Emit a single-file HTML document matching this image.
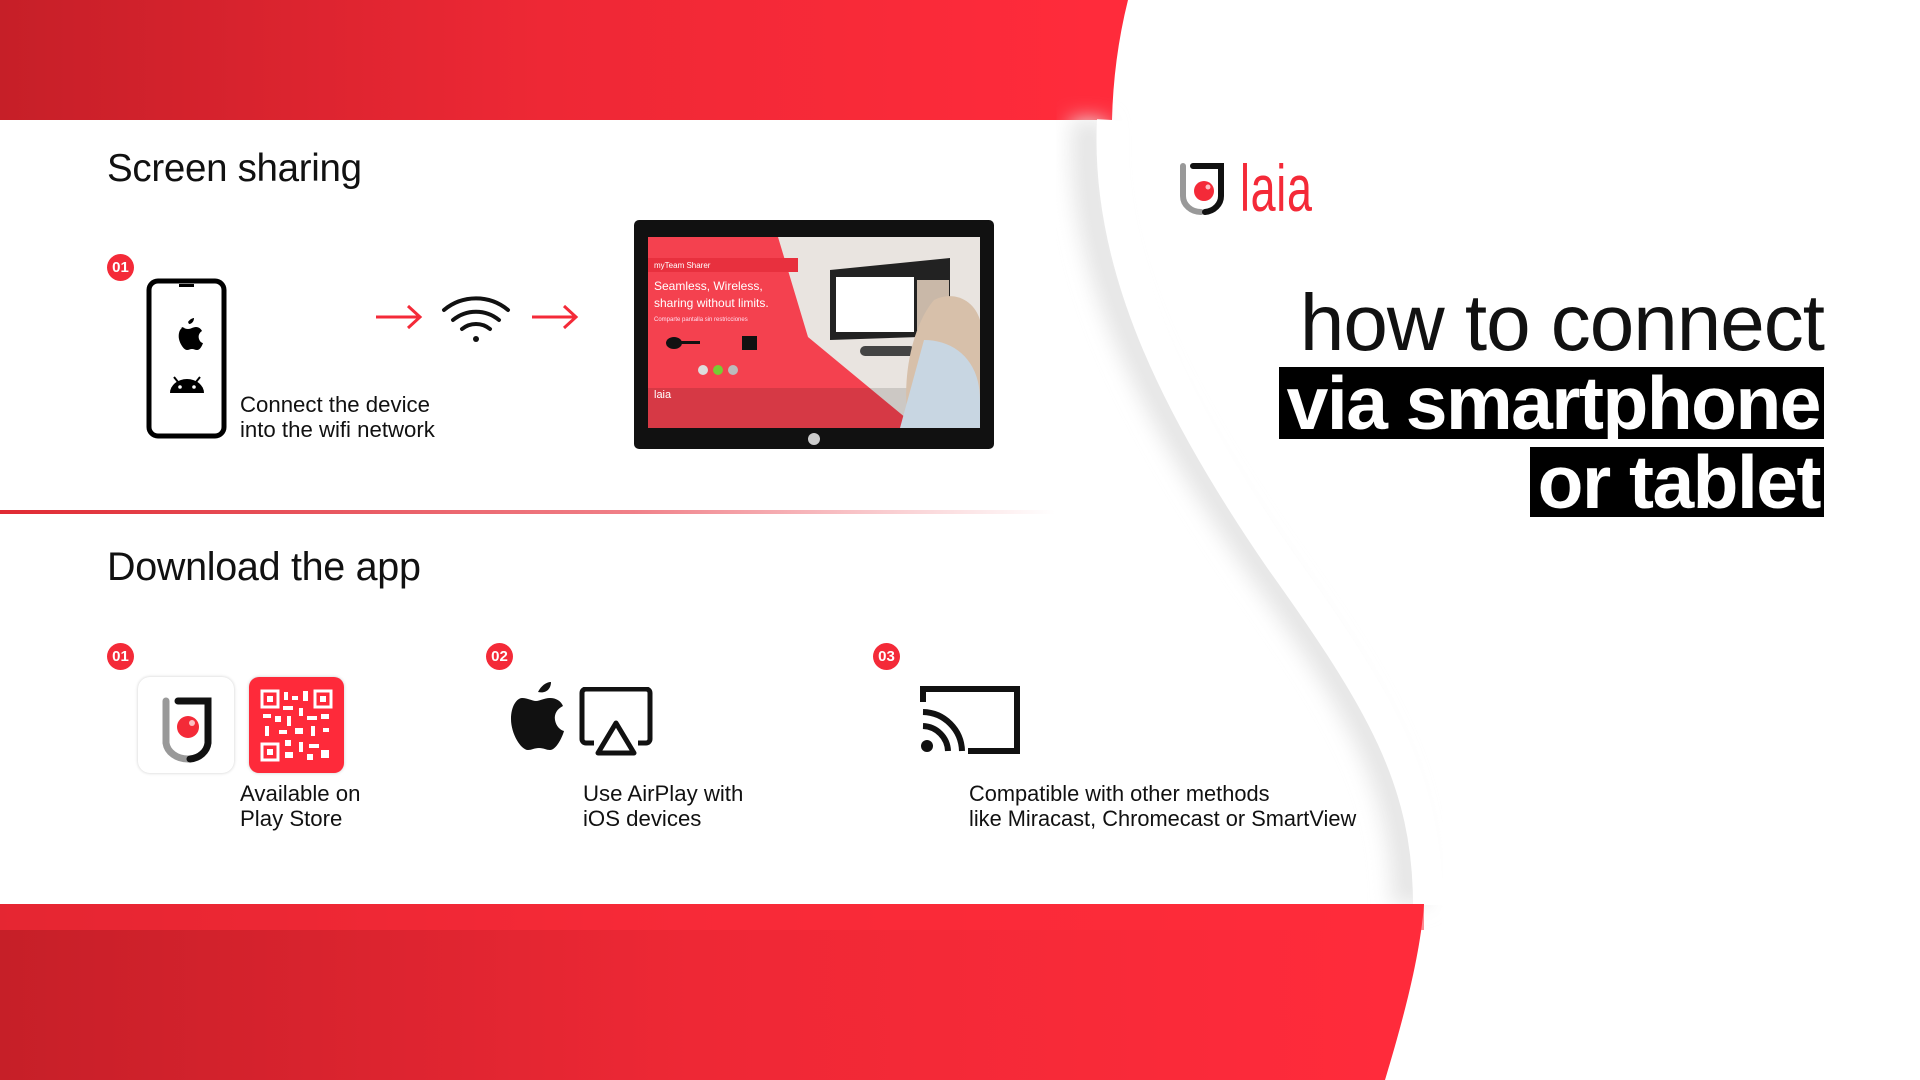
<!DOCTYPE html>
<html><head><meta charset="utf-8">
<style>
*{margin:0;padding:0;box-sizing:border-box}
body{width:1920px;height:1080px;overflow:hidden;background:#fff;font-family:"Liberation Sans",sans-serif;color:#111;position:relative}
.abs{position:absolute}
.h2{color:#111;letter-spacing:-0.3px}
.badge{width:27px;height:27px;border-radius:50%;background:#f42a38;color:#fff;font-size:15px;font-weight:bold;text-align:center;line-height:27px}
.t{font-size:22.2px;line-height:25px;color:#111}
.hl{line-height:80px;letter-spacing:-1px;text-align:right;right:96px;white-space:nowrap}
.blk{background:#000;color:#fff;font-weight:bold;padding:0 4px 0 8px;display:inline-block}
</style></head><body>
<svg class="abs" style="left:0;top:0" width="1920" height="1080">
<defs>
<linearGradient id="rg" x1="0" x2="1"><stop offset="0" stop-color="#c61f28"/><stop offset="0.5" stop-color="#ee2835"/><stop offset="1" stop-color="#ff2b3b"/></linearGradient>
<linearGradient id="ln" x1="0" x2="1"><stop offset="0" stop-color="#e02a33"/><stop offset="0.6" stop-color="#f08088"/><stop offset="1" stop-color="#fff"/></linearGradient>
<filter id="bl"><feGaussianBlur stdDeviation="10"/></filter>
</defs>
<rect x="0" y="0" width="1090" height="120" fill="url(#rg)"/>
<path d="M1085 0 L1128 0 C1118 40 1113 80 1112 120 L1085 120Z" fill="#ff2b3b"/>
<path d="M1090 120 C1080 260 1150 400 1260 560 C1360 700 1410 780 1410 905" stroke="#e6e6e6" stroke-width="36" fill="none" filter="url(#bl)"/>
<path d="M1112 120 C1105 260 1170 400 1280 560 C1380 700 1428 780 1428 905" stroke="#fff" stroke-width="30" fill="none"/>
<rect x="0" y="904" width="1385" height="176" fill="url(#rg)"/>
<path d="M1380 904 L1424 904 C1420 960 1400 1030 1385 1080 L1380 1080Z" fill="#ff2b3b"/>
<rect x="0" y="904" width="1424" height="26" fill="#ff2b3b" opacity="0.55"/>
<rect x="0" y="510" width="1055" height="4" fill="url(#ln)"/>
</svg>

<div class="abs h2" style="left:107px;top:147px;font-size:38.5px">Screen sharing</div>
<div class="abs h2" style="left:107px;top:545px;font-size:39.5px">Download the app</div>

<div class="abs badge" style="left:107px;top:254px">01</div>
<div class="abs badge" style="left:107px;top:643px">01</div>
<div class="abs badge" style="left:486px;top:643px">02</div>
<div class="abs badge" style="left:873px;top:643px">03</div>

<svg class="abs" style="left:146px;top:278px" width="82" height="162">
<rect x="3" y="3" width="75" height="155" rx="9" fill="#fff" stroke="#000" stroke-width="5"/>
<rect x="33" y="6" width="15" height="3" fill="#000"/>
<path d="M42 44c2-3 5-4 6-4-0 3-2 6-5 6zM34 49c3 0 5 2 8 2s5-2 8-2c3 0 5 2 6 4-3 2-4 5-3 8 1 3 3 4 4 4-1 3-3 7-6 7-2 0-3-1-5-1s-3 1-5 1c-3 0-7-6-8-11-1-6 1-12 6-12z" fill="#000"/>
<path d="M24 115a17 14 0 0 1 34 0z" fill="#000"/><circle cx="34" cy="109" r="1.8" fill="#fff"/><circle cx="48" cy="109" r="1.8" fill="#fff"/>
<path d="M28 99l4 5M54 99l-4 5" stroke="#000" stroke-width="2"/>
</svg>
<svg class="abs" style="left:374px;top:292px" width="206" height="52">
<path d="M2 25h44M34 14l12 11-12 11" stroke="#f42a38" stroke-width="3" fill="none"/>
<path d="M158 25h44M190 14l12 11-12 11" stroke="#f42a38" stroke-width="3" fill="none"/>
<path d="M70 18a50 50 0 0 1 64 0M79 28a36 36 0 0 1 46 0M88 37a22 22 0 0 1 28 0" stroke="#111" stroke-width="4" fill="none" stroke-linecap="round"/>
<circle cx="102" cy="47" r="3" fill="#111"/>
</svg>
<div class="abs t" style="left:240px;top:392px">Connect the device<br>into the wifi network</div>

<svg class="abs" style="left:634px;top:220px" width="360" height="229">
<rect x="0" y="0" width="360" height="229" rx="5" fill="#111"/>
<rect x="14" y="17" width="332" height="191" fill="#e9e4e0"/>
<path d="M14 17h130l30 100 110 91H14z" fill="#f4414f"/>
<path d="M14 168h332v40H14z" fill="#000" opacity="0.12"/>
<rect x="14" y="38" width="150" height="14" fill="#e8303e"/>
<text x="20" y="48" font-size="8" fill="#fff" font-family="Liberation Sans">myTeam Sharer</text>
<text x="20" y="70" font-size="12" fill="#fff" font-family="Liberation Sans">Seamless, Wireless,</text>
<text x="20" y="87" font-size="12" fill="#fff" font-family="Liberation Sans">sharing without limits.</text>
<text x="20" y="101" font-size="6" fill="#fde" font-family="Liberation Sans">Comparte pantalla sin restricciones</text>
<ellipse cx="40" cy="123" rx="8" ry="6" fill="#111"/><rect x="44" y="121" width="22" height="3" fill="#111"/>
<rect x="108" y="116" width="15" height="14" fill="#111"/>
<circle cx="69" cy="150" r="5" fill="#ddd"/><circle cx="84" cy="150" r="5" fill="#7c3"/><circle cx="99" cy="150" r="5" fill="#bbb"/>
<text x="20" y="178" font-size="11" fill="#fff" font-family="Liberation Sans">laia</text>
<path d="M196 50l120-12v78l-120 4z" fill="#222"/><rect x="202" y="57" width="78" height="55" fill="#fff"/>
<rect x="283" y="60" width="32" height="50" fill="#c9b8a8"/>
<rect x="226" y="126" width="55" height="10" rx="5" fill="#444"/>
<path d="M300 80c20-10 40 0 46 20v108h-70c-10-40 0-100 24-128z" fill="#d7c0aa"/>
<path d="M290 120c30 0 56 20 56 60v28h-80z" fill="#c8d6e2"/>
<circle cx="180" cy="219" r="6" fill="#ccc"/>
</svg>

<div class="abs" style="left:138px;top:677px;width:96px;height:96px;border-radius:12px;background:#fff;box-shadow:0 0 3px #ccc"></div>
<svg class="abs" style="left:138px;top:677px" width="96" height="96">
<path d="M28 24v42a22 18 0 0 0 22 16" stroke="#999" stroke-width="7" fill="none" stroke-linecap="round"/>
<path d="M40 24h30v42a20 18 0 0 1-18 16" stroke="#111" stroke-width="7" fill="none" stroke-linecap="round"/>
<circle cx="50" cy="50" r="11" fill="#f42a38"/><circle cx="54" cy="46" r="3" fill="#fff" opacity="0.7"/>
</svg>
<div class="abs" style="left:249px;top:677px;width:95px;height:96px;border-radius:10px;background:#fe2a3a;box-shadow:0 0 3px #ccc"></div>
<svg class="abs" style="left:259px;top:688px" width="75" height="75">
<g fill="none" stroke="#fff" stroke-width="3"><rect x="3" y="3" width="16" height="16"/><rect x="56" y="3" width="16" height="16"/><rect x="3" y="56" width="16" height="16"/></g>
<g fill="#fff"><rect x="8" y="8" width="6" height="6"/><rect x="61" y="8" width="6" height="6"/><rect x="8" y="61" width="6" height="6"/>
<rect x="25" y="4" width="4" height="8"/><rect x="33" y="8" width="6" height="4"/><rect x="44" y="3" width="5" height="10"/><rect x="24" y="18" width="10" height="4"/><rect x="40" y="20" width="4" height="8"/>
<rect x="4" y="26" width="8" height="4"/><rect x="16" y="28" width="6" height="6"/><rect x="28" y="28" width="4" height="10"/><rect x="48" y="28" width="10" height="4"/><rect x="62" y="26" width="8" height="5"/>
<rect x="6" y="38" width="4" height="10"/><rect x="20" y="42" width="8" height="4"/><rect x="36" y="40" width="8" height="6"/><rect x="52" y="38" width="4" height="10"/><rect x="64" y="40" width="6" height="4"/>
<rect x="26" y="52" width="6" height="6"/><rect x="40" y="54" width="4" height="10"/><rect x="50" y="56" width="10" height="4"/><rect x="62" y="62" width="8" height="8"/><rect x="26" y="64" width="8" height="6"/><rect x="48" y="66" width="6" height="6"/></g>
</svg>
<div class="abs t" style="left:240px;top:781px">Available on<br>Play Store</div>

<svg class="abs" style="left:504px;top:676px" width="62" height="78">
<path d="M34 16c3-6 8-10 13-10 0 6-4 12-13 10zM18 22c6 0 10 3 14 3s8-3 14-3c6 0 11 3 13 8-6 3-9 8-8 14 1 6 5 10 9 11-2 7-8 19-14 19-4 0-6-2-11-2s-7 2-11 2c-7 0-17-16-17-31 0-13 6-21 11-21z" fill="#111"/>
</svg>
<svg class="abs" style="left:578px;top:687px" width="78" height="70">
<path d="M16 56H8a4 4 0 0 1-4-4V6a4 4 0 0 1 4-4h60a4 4 0 0 1 4 4v46a4 4 0 0 1-4 4h-8" stroke="#111" stroke-width="5" fill="none"/>
<path d="M38 36l18 30H20z" stroke="#111" stroke-width="5" fill="none" stroke-linejoin="round"/>
</svg>
<div class="abs t" style="left:583px;top:781px">Use AirPlay with<br>iOS devices</div>

<svg class="abs" style="left:920px;top:684px" width="102" height="72">
<path d="M3 18V5h94v62H48" stroke="#111" stroke-width="6" fill="none"/>
<path d="M3 28a40 40 0 0 1 39 39M3 42a26 26 0 0 1 25 25" stroke="#111" stroke-width="6" fill="none"/>
<circle cx="7" cy="62" r="6" fill="#111"/>
</svg>
<div class="abs t" style="left:969px;top:781px;font-size:21.8px">Compatible with other methods<br>like Miracast, Chromecast or SmartView</div>

<svg class="abs" style="left:1178px;top:160px" width="60" height="60">
<path d="M5 6v30a18 16 0 0 0 18 16" stroke="#999" stroke-width="6" fill="none" stroke-linecap="round"/>
<path d="M15 6h28v30a18 16 0 0 1-16 16" stroke="#111" stroke-width="6" fill="none" stroke-linecap="round"/>
<circle cx="26" cy="31" r="10" fill="#f42a38"/><circle cx="30" cy="27" r="2.5" fill="#fff" opacity="0.7"/>
</svg>
<div class="abs" style="left:1240px;top:150px;font-size:66px;color:#f42a38;transform:scaleX(0.68);transform-origin:left top;letter-spacing:1px;line-height:76px">laia</div>

<div class="abs hl" style="top:283px;color:#111;font-size:80px">how to connect</div>
<div class="abs hl" style="top:367px"><span class="blk" style="line-height:72px;font-size:75px;letter-spacing:-1.5px">via smartphone</span></div>
<div class="abs hl" style="top:447px"><span class="blk" style="line-height:70px;font-size:75px;letter-spacing:-1.5px">or tablet</span></div>
</body></html>
